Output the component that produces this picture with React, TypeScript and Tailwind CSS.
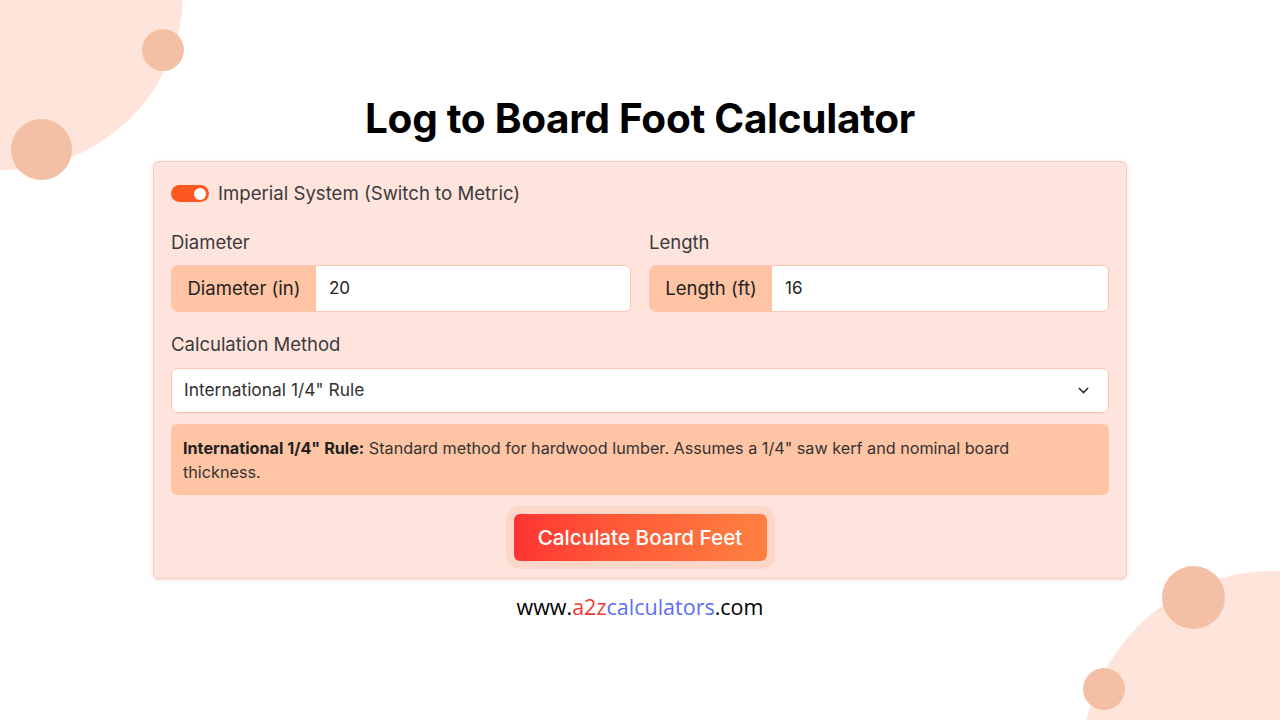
import { ChevronDown } from "lucide-react";

function Field({ label, addon, value, addonW }: { label: string; addon: string; value: string; addonW: string }) {
  return (
    <div className="flex flex-1 flex-col">
      <label className="h-6 text-[18.5px] leading-6 text-[#3b3b3b]">{label}</label>
      <div className="mt-[11px] flex h-[47px] overflow-hidden rounded-md border border-[#fcc7b0] bg-white">
        <span className={`flex items-center justify-center bg-[#ffc4a4] text-[18.5px] text-[#222] ${addonW}`}>{addon}</span>
        <span className="flex items-center pl-[13px] text-[17px] text-[#222]">{value}</span>
      </div>
    </div>
  );
}

export default function App() {
  return (
    <div className="relative h-[720px] w-[1280px] overflow-hidden bg-white font-['Inter',sans-serif]">
      {/* background decorations */}
      <div className="absolute left-[-173px] top-[-186px] h-[356px] w-[356px] rounded-full bg-[#fee4da]" />
      <div className="absolute left-[142px] top-[29px] h-[42px] w-[42px] rounded-full bg-[#f4c0a5]" />
      <div className="absolute left-[11px] top-[119px] h-[61px] w-[61px] rounded-full bg-[#f4c0a5]" />
      <div className="absolute left-[1082px] top-[571px] h-[380px] w-[380px] rounded-full bg-[#fee4da]" />
      <div className="absolute left-[1162px] top-[566px] h-[63px] w-[63px] rounded-full bg-[#f4c0a5]" />
      <div className="absolute left-[1083px] top-[668px] h-[42px] w-[42px] rounded-full bg-[#f4c0a5]" />

      <div className="relative flex flex-col items-center pt-[94px]">
        <h1 className="h-[50px] text-[40.5px] font-bold leading-[50px] tracking-[-0.3px] text-black">Log to Board Foot Calculator</h1>

        <div className="mt-[17px] w-[974px] rounded-md border border-[#f6cdbd] bg-[#fee4dc] px-[17px] pb-[17px] pt-[18px] shadow-[0_1px_4px_rgba(0,0,0,0.12)]">
          <div className="flex h-[27px] items-center gap-[9px]">
            <div className="flex h-[17px] w-[38px] items-center justify-end rounded-full bg-[#ff5722] pr-[3px]">
              <div className="h-[12px] w-[12px] rounded-full bg-white" />
            </div>
            <span className="text-[18.6px] text-[#3b3b3b]">Imperial System (Switch to Metric)</span>
          </div>

          <div className="mt-[23px] flex gap-[18px]">
            <Field label="Diameter" addon="Diameter (in)" value="20" addonW="w-[144px]" />
            <Field label="Length" addon="Length (ft)" value="16" addonW="w-[122px]" />
          </div>

          <label className="mt-[20px] block h-6 text-[18.5px] leading-6 text-[#3b3b3b]">Calculation Method</label>
          <div className="mt-[12px] flex h-[45px] items-center justify-between rounded-md border border-[#fcc7b0] bg-white pl-[12px] pr-[16px]">
            <span className="text-[17.4px] text-[#333]">International 1/4" Rule</span>
            <ChevronDown size={17} strokeWidth={2} className="text-[#333]" />
          </div>

          <div className="mt-[11px] rounded-md bg-[#ffc4a4] pb-[11px] pl-[12px] pr-[24px] pt-[12px] text-[16.2px] leading-6 text-[#333]">
            <b className="font-bold text-[#222]">International 1/4" Rule:</b> Standard method for hardwood lumber. Assumes a 1/4" saw kerf and nominal board thickness.
          </div>

          <div className="mt-[19px] flex justify-center">
            <button className="h-[47px] w-[253px] rounded-md bg-gradient-to-r from-[#ff3333] to-[#ff8040] text-[20.7px] font-medium text-white ring-8 ring-[#fdd6ca]">
              Calculate Board Feet
            </button>
          </div>
        </div>

        <p className="mt-[14px] font-['Open_Sans',sans-serif] text-[21.5px] leading-7 text-black">
          www.<span className="text-[#ef3b36]">a2z</span>
          <span className="text-[#5a6ef5]">calculators</span>.com
        </p>
      </div>
    </div>
  );
}
